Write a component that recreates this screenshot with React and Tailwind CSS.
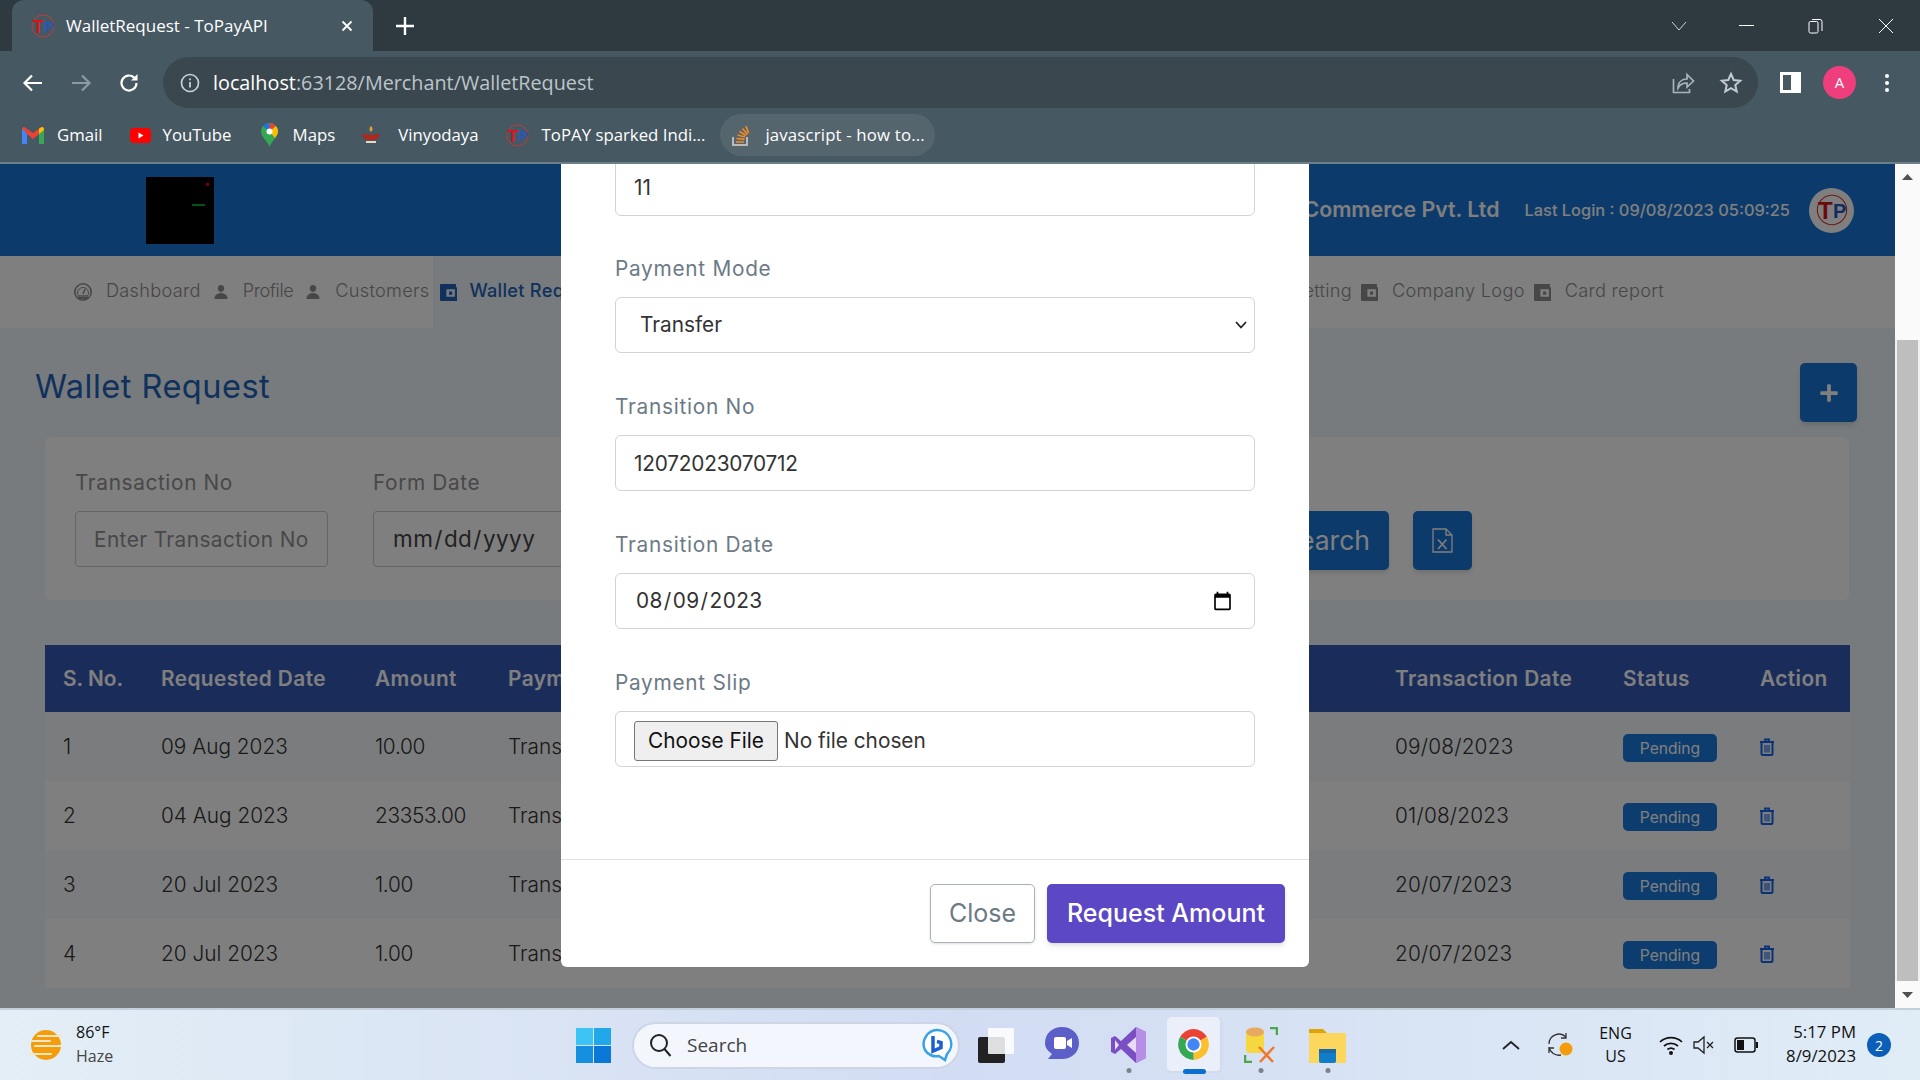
import { FaPlus } from "react-icons/fa";
import { IoPerson } from "react-icons/io5";

const rows = [
    { no: 1, req: "09 Aug 2023", amount: "10.00", tran: "09/08/2023" },
    { no: 2, req: "04 Aug 2023", amount: "23353.00", tran: "01/08/2023" },
    { no: 3, req: "20 Jul 2023", amount: "1.00", tran: "20/07/2023" },
    { no: 4, req: "20 Jul 2023", amount: "1.00", tran: "20/07/2023" },
];

function TpLogo({ size = 24 }) {
    return (
        <svg width={size} height={size} viewBox="0 0 24 24" className="shrink-0">
            <circle cx="12" cy="12" r="11" fill="none" stroke="#d33" strokeWidth="0.8" />
            <text x="1.500" y="19" fontSize="18" fontWeight="700" fontFamily="Liberation Sans" fill="#d8151c">T</text>
            <text x="12.800" y="18" fontSize="15" fontWeight="700" fontFamily="Liberation Sans" fill="#2557c0">P</text>
        </svg>
    );
}

function WalletIcon({ className }) {
    return (
        <svg viewBox="1 1 16 16" className={className}>
            <path
                fillRule="evenodd"
                fill="currentColor"
                d="M2 1h14v3h1v13H2a1 1 0 0 1-1-1V2a1 1 0 0 1 1-1zM7 6v7h8V6H7zm2.500 2h3v3h-3V8z"
            />
        </svg>
    );
}

function GaugeIcon({ className }) {
    return (
        <svg viewBox="0 0 18 18" className={className}>
            <circle cx="9" cy="9" r="8.200" fill="none" stroke="currentColor" strokeWidth="1.600" />
            <path d="M3.500 10a5.500 5.500 0 0 1 11 0c0 1-.3 2-.8 2.800H4.300A5.500 5.500 0 0 1 3.500 10z" fill="none" stroke="currentColor" strokeWidth="1" />
            <path d="M9 11l2-5" stroke="currentColor" strokeWidth="1.400" />
            <path d="M4 13.500h10V16H4z" fill="currentColor" />
        </svg>
    );
}

function TrashIcon() {
    return (
        <svg width="16" height="18" viewBox="0 0 16 18" className="text-[#1565e8]">
            <path d="M1 4h14M6 3.500V1.500h4v2" fill="none" stroke="currentColor" strokeWidth="1.800" />
            <path d="M2.500 4.500v11.500a1 1 0 0 0 1 1h9a1 1 0 0 0 1-1V4.500" fill="none" stroke="currentColor" strokeWidth="2" />
            <path d="M6 7v7.500M8 7v7.500M10 7v7.500" stroke="currentColor" strokeWidth="1.100" />
        </svg>
    );
}

function ExcelIcon() {
    return (
        <svg width="21" height="25" viewBox="0 0 21 25" className="text-white">
            <path d="M1 1h13l6 6v17H1zM14 1v6h6" fill="none" stroke="currentColor" strokeWidth="1.300" />
            <path d="M6 11.500l8.500 9.500M14.500 11.500L6 21" stroke="currentColor" strokeWidth="1.700" />
        </svg>
    );
}

function ChromeBar() {
    return (
        <div className="font-['Open_Sans',sans-serif] text-white shrink-0">
            <div className="h-[51px] bg-[#2e3a40] flex">
                <div className="ml-[12px] w-[361px] bg-[#465862] rounded-t-[12px] flex items-center pl-[19px]">
                    <TpLogo size={24} />
                    <span className="ml-[11px] text-[17px]">WalletRequest - ToPayAPI</span>
                    <svg width="12" height="12" viewBox="0 0 12 12" className="ml-[73px]">
                        <path d="M1.500 1.500l9 9M10.500 1.500l-9 9" stroke="#fff" strokeWidth="1.800" />
                    </svg>
                </div>
                <div className="ml-[23px] self-center">
                    <svg width="18" height="18" viewBox="0 0 18 18">
                        <path d="M9 0v18M0 9h18" stroke="#fff" strokeWidth="2.400" />
                    </svg>
                </div>
                <div className="ml-auto flex items-center pr-[26px]">
                    <svg width="16" height="10" viewBox="0 0 16 10" className="mr-[52px]">
                        <path d="M1 1l7 8 7-8" fill="none" stroke="#cfd6da" strokeWidth="1" />
                    </svg>
                    <div className="w-[15px] h-px bg-white mr-[54px]" />
                    <svg width="15" height="16" viewBox="0 0 15 16" className="mr-[55px]">
                        <path d="M4 1.500h8a2 2 0 0 1 2 2V13M1 5a1.500 1.500 0 0 1 1.500-1.500h6A1.500 1.500 0 0 1 10 5v8.500A1.500 1.500 0 0 1 8.500 15h-6A1.500 1.500 0 0 1 1 13.500z" fill="none" stroke="#fff" strokeWidth="1" />
                    </svg>
                    <svg width="16" height="16" viewBox="0 0 16 16">
                        <path d="M1 1l14 14M15 1L1 15" stroke="#fff" strokeWidth="1" />
                    </svg>
                </div>
            </div>
            <div className="h-[57px] bg-[#465862] flex items-center pt-[6px]">
                <svg width="22" height="22" viewBox="0 0 22 22" className="ml-[22px]">
                    <path d="M20 11H3M10 3.500L2.500 11l7.500 7.500" fill="none" stroke="#fff" strokeWidth="2.200" />
                </svg>
                <svg width="22" height="22" viewBox="0 0 22 22" className="ml-[26px]">
                    <path d="M2 11h17M12 3.500l7.500 7.500-7.500 7.500" fill="none" stroke="#8d9aa2" strokeWidth="2.200" />
                </svg>
                <svg width="22" height="22" viewBox="0 0 22 22" className="ml-[26px]">
                    <path d="M18.500 11a7.500 7.500 0 1 1-2.300-5.400" fill="none" stroke="#fff" strokeWidth="2.200" />
                    <path d="M19.500 2v6.500H13z" fill="#fff" />
                </svg>
                <div className="ml-[23px] w-[1595px] h-[51px] bg-[#3b474f] rounded-full flex items-center pl-[17px] pr-[15px]">
                    <svg width="20" height="20" viewBox="0 0 20 20">
                        <circle cx="10" cy="10" r="8.500" fill="none" stroke="#c8d0d4" strokeWidth="1.700" />
                        <path d="M10 9v5.500M10 5.500v1.800" stroke="#c8d0d4" strokeWidth="1.800" />
                    </svg>
                    <span className="ml-[13px] text-[19.800px] text-white">localhost</span>
                    <span className="text-[19.800px] text-[#bcc5ca]">:63128/Merchant/WalletRequest</span>
                    <svg width="24" height="24" viewBox="0 0 24 24" className="ml-auto mr-[24px]">
                        <path d="M2.500 8v13.500h16V18M7 17c0-6 4-9 9-9V3.500L22.500 10 16 16v-4c-4 0-7 1.500-9 5z" fill="none" stroke="#aab3b8" strokeWidth="1.700" />
                    </svg>
                    <svg width="24" height="24" viewBox="0 0 24 24">
                        <path d="M12 3l2.700 6 6.500.7-4.900 4.300 1.400 6.500L12 17.200l-5.700 3.300 1.400-6.500L2.800 9.700 9.300 9z" fill="none" stroke="#c3cbd0" strokeWidth="2" />
                    </svg>
                </div>
                <div className="ml-[22px] w-[21px] h-[21px] border-[3px] border-white border-r-[10px] bg-transparent" />
                <div className="ml-[22px] w-[33px] h-[33px] rounded-full bg-[#ee3f7c] flex items-center justify-center text-[15px]">A</div>
                <div className="ml-[29px] flex flex-col gap-[3px]">
                    <i className="w-[4px] h-[4px] rounded-full bg-white block" />
                    <i className="w-[4px] h-[4px] rounded-full bg-white block" />
                    <i className="w-[4px] h-[4px] rounded-full bg-white block" />
                </div>
            </div>
            <div className="h-[56px] bg-[#465862] border-b-[2px] border-[#6c7e88] flex items-center text-[16.800px] pl-[22px]">
                <svg width="22" height="17" viewBox="0 0 22 17">
                    <path d="M0 2v15h5V7l6 5 6-5v10h5V2a2 2 0 0 0-3.200-1.600L11 6 3.200.4A2 2 0 0 0 0 2z" fill="#ea4335" />
                    <path d="M0 2v15h5V7L2 3z" fill="#4285f4" />
                    <path d="M17 7v10h5V2l-3 1z" fill="#34a853" />
                    <path d="M18.800.4L17 1.800V7l5-4V2a2 2 0 0 0-3.200-1.600z" fill="#fbbc04" />
                </svg>
                <span className="ml-[13px]">Gmail</span>
                <svg width="21" height="21" viewBox="0 0 21 21" className="ml-[27px]">
                    <rect y="3" width="21" height="15" rx="4" fill="#f00" />
                    <path d="M8.500 7.500v6l5-3z" fill="#fff" />
                </svg>
                <span className="ml-[12px]">YouTube</span>
                <svg width="17" height="24" viewBox="0 0 17 24" className="ml-[29px]">
                    <path d="M8.500 0A8.500 8.500 0 0 0 0 8.500C0 14 6 17 8.500 24 11 17 17 14 17 8.500A8.500 8.500 0 0 0 8.500 0z" fill="#34a853" />
                    <path d="M8.500 0A8.500 8.500 0 0 0 2 3l6.500 5.500z" fill="#1a73e8" />
                    <path d="M8.500 0A8.500 8.500 0 0 1 15 3L8.500 8.500z" fill="#ea4335" />
                    <path d="M15 3a8.500 8.500 0 0 1 2 5.500c0 2.500-1.500 4.500-3 6.500L8.500 8.500z" fill="#fbbc04" />
                    <circle cx="8.500" cy="8.500" r="3" fill="#fff" />
                </svg>
                <span className="ml-[15px]">Maps</span>
                <svg width="18" height="18" viewBox="0 0 18 18" className="ml-[27px]">
                    <path d="M9 0c2 2 2 4 0 6-2-2-2-4 0-6z" fill="#f0a030" />
                    <path d="M0 8c3 0 6 1 9 1s6-1 9-1c-1 5-5 6-9 6S1 13 0 8z" fill="#b3261e" />
                    <rect x="4" y="15" width="10" height="2" fill="#e8d9c0" />
                </svg>
                <span className="ml-[18px]">Vinyodaya</span>
                <div className="ml-[27px]"><TpLogo size={23} /></div>
                <span className="ml-[13px]">ToPAY sparked Indi...</span>
                <div className="ml-[15px] w-[215px] h-[42px] rounded-full bg-[#55656e] flex items-center pl-[12px]">
                    <svg width="18" height="22" viewBox="0 0 18 22">
                        <path d="M1 13v8h14v-8" fill="none" stroke="#b9b9b9" strokeWidth="2" />
                        <path d="M4 18h8M4.500 14.500l8 .8M5.500 11l7.500 2M7.500 7.500l6.500 4M10.500 4.500l5 6M14 2l2.500 7" stroke="#f28a24" strokeWidth="1.700" />
                    </svg>
                    <span className="ml-[15px] tracking-[0.01em]">javascript - how to...</span>
                </div>
            </div>
        </div>
    );
}

function NavItem({ icon, label, active, textClass = "" }) {
    return (
        <div className={`flex items-center h-[72px] ${active ? "gap-[12px] bg-[#eef6fc] text-[#1e63b8] font-medium pl-[7px] pr-[20px] -ml-[8px]" : "gap-[14px]"}`}>
            {icon}
            <span className={`-mt-[2px] ${textClass}`}>{label}</span>
        </div>
    );
}

function Nav() {
    const person = <IoPerson className="w-[16px] h-[16px]" />;
    const wallet = <WalletIcon className="w-[17px] h-[17px]" />;
    return (
        <div className="h-[72px] bg-white flex items-center text-[18.200px] font-light text-[#8e8e8e] pl-[74px] pr-[231px] shrink-0 tracking-[0.015em]">
            <div className="flex items-center gap-[12px]">
                <NavItem icon={<GaugeIcon className="w-[18px] h-[18px]" />} label="Dashboard" />
                <NavItem icon={person} label="Profile" textClass="tracking-[-0.025em]" />
                <NavItem icon={person} label="Customers" />
                <NavItem icon={wallet} label="Wallet Request" active />
            </div>
            <div className="ml-auto flex items-center gap-[9px]">
                <NavItem icon={wallet} label="Setting" />
                <NavItem icon={wallet} label="Company Logo" />
                <NavItem icon={wallet} label="Card report" />
            </div>
        </div>
    );
}

function FilterField({ label, children }) {
    return (
        <div className="w-[253px] shrink-0">
            <label className="block text-[20.800px] leading-[31px] mb-[13px] text-[#909090] tracking-[0.03em]">{label}</label>
            {children}
        </div>
    );
}

const filterInput = "block w-full h-[56px] border border-[#c6ccd2] rounded-[4px] bg-white px-[18px] text-[20.800px] text-[#333] placeholder:text-[#909090] tracking-[0.02em]";

function WalletPage() {
    return (
        <div className="absolute inset-0 bg-[#eef6fc] flex flex-col">
            <div className="h-[92px] bg-[#1874d6] flex items-center shrink-0 text-white">
                <div className="ml-[146px] w-[68px] h-[67px] bg-black relative">
                    <i className="absolute left-[60px] top-[6px] w-[3px] h-[3px] bg-red-600 block" />
                    <i className="absolute left-[46px] top-[27px] w-[13px] h-[2px] bg-green-600 block" />
                </div>
                <span className="ml-auto text-[21.300px] font-semibold">ToPay Commerce Pvt. Ltd</span>
                <span className="ml-[25px] text-[16.400px] font-medium">Last Login : 09/08/2023 05:09:25</span>
                <div className="ml-[19px] mr-[41px] w-[45px] h-[45px] rounded-full bg-white flex items-center justify-center">
                    <TpLogo size={32} />
                </div>
            </div>
            <Nav />
            <div className="flex items-start justify-between pl-[35px] pr-[38px] pt-[35px] shrink-0">
                <h1 className="text-[32.500px] text-[#1e63b8] leading-[48px] tracking-[0.015em]">Wallet Request</h1>
                <button className="w-[57px] h-[59px] rounded-[5px] bg-[#1874d6] text-white flex items-center justify-center shadow-md">
                    <FaPlus className="w-[20px] h-[20px]" />
                </button>
            </div>
            <div className="mt-[15px] ml-[45px] mr-[46px] bg-white rounded-[6px] px-[30px] pt-[30px] pb-[30px] flex items-start gap-[45px] shrink-0">
                <FilterField label="Transaction No">
                    <input className={filterInput} placeholder="Enter Transaction No" />
                </FilterField>
                <FilterField label="Form Date">
                    <input type="date" className={`${filterInput} text-[#444] text-[22.500px]`} />
                </FilterField>
                <FilterField label="To Date">
                    <input type="date" className={filterInput} />
                </FilterField>
                <FilterField label="Status">
                    <input className={filterInput} />
                </FilterField>
                <div className="flex gap-[24px] -ml-[4px] mt-[44px] shrink-0">
                    <button className="w-[126px] h-[59px] rounded-[5px] bg-[#1874d6] text-white text-[26.500px] shadow-md">Search</button>
                    <button className="w-[59px] h-[59px] rounded-[5px] bg-[#1874d6] text-white flex items-center justify-center shadow-md">
                        <ExcelIcon />
                    </button>
                </div>
            </div>
            <div className="mt-[45px] mx-[45px] shrink-0">
                <table className="w-[1805px] table-fixed text-left text-[20.800px] text-[#333] font-light">
                    <colgroup>
                        <col className="w-[98px]" />
                        <col className="w-[214px]" />
                        <col className="w-[133px]" />
                        <col className="w-[444px]" />
                        <col className="w-[443px]" />
                        <col className="w-[228px]" />
                        <col className="w-[137px]" />
                        <col className="w-[108px]" />
                    </colgroup>
                    <thead className="bg-[#345ab4] text-white tracking-[0.02em]">
                        <tr className="h-[67px]">
                            <th className="pl-[18px] font-semibold tracking-normal">S. No.</th>
                            <th className="pl-[18px] font-semibold">Requested Date</th>
                            <th className="pl-[18px] font-semibold">Amount</th>
                            <th className="pl-[18px] font-semibold">Payment Mode</th>
                            <th className="pl-[18px] font-semibold">Transition No</th>
                            <th className="pl-[18px] font-semibold">Transaction Date</th>
                            <th className="pl-[18px] font-semibold">Status</th>
                            <th className="pl-[18px] font-semibold">Action</th>
                        </tr>
                    </thead>
                    <tbody>
                        {rows.map((r) => (
                            <tr key={r.no} className={`h-[69px] ${r.no % 2 ? "bg-[#f5f8fa]" : "bg-white"}`}>
                                <td className="pl-[18px]">{r.no}</td>
                                <td className="pl-[18px]">{r.req}</td>
                                <td className="pl-[18px] tracking-[-0.015em]">{r.amount}</td>
                                <td className="pl-[18px]">Transfer</td>
                                <td className="pl-[18px]">12072023070712</td>
                                <td className="pl-[18px] tracking-[0.01em]">{r.tran}</td>
                                <td className="pl-[18px]">
                                    <span className="inline-flex items-center justify-center w-[94px] h-[28px] rounded-[5px] bg-[#1a78dc] text-white text-[15.600px] font-normal">Pending</span>
                                </td>
                                <td className="pl-[17px]">
                                    <TrashIcon />
                                </td>
                            </tr>
                        ))}
                    </tbody>
                </table>
            </div>
        </div>
    );
}

function ModalField({ label, children }) {
    return (
        <div>
            <label className="block text-[20.800px] leading-[31px] mb-[13px] text-[#6c7a86] tracking-[0.035em]">{label}</label>
            {children}
        </div>
    );
}

const modalInput = "block w-full h-[56px] border border-[#ced4da] rounded-[6px] bg-white pl-[18px] pr-[16px] text-[20.800px] text-[#333]";

function RequestModal() {
    return (
        <div className="absolute left-[561px] top-0 w-[748px] h-[803px] bg-white rounded-b-[6px] overflow-hidden flex flex-col">
            <div className="flex-1 px-[54px] flex flex-col gap-[38px] overflow-hidden">
                <input className={`${modalInput} h-[57px] -mt-[5px] -mb-[1px] shrink-0`} defaultValue="11" />
                <ModalField label="Payment Mode">
                    <div className="relative">
                        <select className={`${modalInput} pl-[24px] appearance-none`} defaultValue="Transfer">
                            <option>Transfer</option>
                        </select>
                        <svg width="12" height="8" viewBox="0 0 12 8" className="absolute right-[8px] top-[24px]">
                            <path d="M1 1l5 5.500L11 1" fill="none" stroke="#222" strokeWidth="1.800" />
                        </svg>
                    </div>
                </ModalField>
                <ModalField label="Transition No">
                    <input className={`${modalInput} tracking-[-0.01em]`} defaultValue="12072023070712" />
                </ModalField>
                <ModalField label="Transition Date">
                    <input type="date" className={`${modalInput} pl-[19px] pr-[19px] tracking-[0.02em]`} defaultValue="2023-08-09" />
                </ModalField>
                <ModalField label="Payment Slip">
                    <input
                        type="file"
                        className="block w-full h-[56px] border border-[#ced4da] rounded-[6px] bg-white pl-[18px] pt-[9px] text-[20.800px] text-[#333] file:h-[40px] file:w-[144px] file:mr-[6px] file:bg-[#efefef] file:border file:border-[#767676] file:rounded-[3px] file:text-[#111]"
                    />
                </ModalField>
            </div>
            <div className="h-[108px] border-t border-[#dee2e6] flex items-center justify-end gap-[12px] pr-[24px] shrink-0">
                <button className="w-[105px] h-[59px] border border-[#a9b2b9] rounded-[5px] text-[#6c7a86] text-[25px] shadow-sm">Close</button>
                <button className="w-[238px] h-[59px] rounded-[5px] bg-[#5c48c4] text-white text-[25px] font-medium shadow-md">Request Amount</button>
            </div>
        </div>
    );
}

function Scrollbar() {
    return (
        <div className="w-[25px] shrink-0 bg-[#f1f1f1] flex flex-col items-center">
            <div className="h-[176px] w-full pt-[10px] flex justify-center bg-[#fafafa]">
                <svg width="11" height="6" viewBox="0 0 11 6"><path d="M5.500 0L11 6H0z" fill="#505050" /></svg>
            </div>
            <div className="flex-1 w-[21px] bg-[#bebebe]" />
            <div className="h-[27px] w-full flex items-center justify-center bg-[#fafafa]">
                <svg width="11" height="6" viewBox="0 0 11 6"><path d="M0 0h11L5.500 6z" fill="#505050" /></svg>
            </div>
        </div>
    );
}

function TaskIcon({ children, dot, className }) {
    return (
        <div className={`relative flex justify-center items-center ${className}`}>
            {children}
            {dot && <i className="absolute left-1/2 -translate-x-1/2 top-[41px] w-[5px] h-[5px] rounded-full bg-[#7d8288] block" />}
        </div>
    );
}

function Taskbar() {
    return (
        <div className="h-[72px] shrink-0 border-t-[2px] border-[#c5cfdc] bg-gradient-to-r from-[#e3eef6] via-[#d2dcf3] to-[#e0ecf6] flex items-center font-['Open_Sans',sans-serif] text-[#111]">
            <div className="w-[576px] shrink-0 flex items-center pl-[29px]">
                <svg width="33" height="30" viewBox="0 0 33 30">
                    <ellipse cx="17" cy="15" rx="15" ry="15" fill="#f59c0c" />
                    <path d="M9 6h24M3 11h18M6 16h27M0 24h22" stroke="#f5e6c4" strokeWidth="2.200" strokeLinecap="round" />
                </svg>
                <div className="ml-[14px] leading-[24px] text-[16px] -mt-[2px]">
                    <div>86°F</div>
                    <div className="text-[#444]">Haze</div>
                </div>
            </div>
            <TaskIcon className="w-[35px] h-[35px]">
                <svg width="35" height="35" viewBox="0 0 35 35">
                    <rect width="17" height="17" fill="#3cc4f4" />
                    <rect x="18" width="17" height="17" fill="#20a8ea" />
                    <rect y="18" width="17" height="17" fill="#1590e0" />
                    <rect x="18" y="18" width="17" height="17" fill="#0a78d6" />
                </svg>
            </TaskIcon>
            <div className="ml-[21px] w-[328px] h-[47px] rounded-full bg-[#f3f6fd] border-2 border-[#cdd5e6] flex items-center pl-[15px] pr-[5px]">
                <svg width="23" height="24" viewBox="0 0 23 24">
                    <circle cx="10" cy="10" r="8" fill="none" stroke="#222" strokeWidth="2" />
                    <path d="M15.500 16l6 7" stroke="#222" strokeWidth="2" />
                </svg>
                <span className="ml-[15px] text-[19px] text-[#444]">Search</span>
                <svg width="32" height="34" viewBox="0 0 32 34" className="ml-auto">
                    <path d="M16 2a14 14 0 0 1 10 24l-2 6-6-4A13 13 0 0 1 4 22 14 14 0 0 1 16 2z" fill="#fff" stroke="#36a3e8" strokeWidth="2.500" />
                    <path d="M12 8v15l8-3.500v-5l-4-1" fill="none" stroke="#1c5fd4" strokeWidth="3.500" />
                </svg>
            </div>
            <TaskIcon className="ml-[18px] w-[36px] h-[35px]">
                <svg width="36" height="35" viewBox="0 0 36 35">
                    <rect y="9" width="27" height="26" rx="2" fill="#222" />
                    <rect x="10" width="26" height="26" rx="1" fill="#fff" fillOpacity="0.85" />
                </svg>
            </TaskIcon>
            <TaskIcon className="ml-[31px] w-[34px] h-[36px]">
                <svg width="34" height="36" viewBox="0 0 34 36">
                    <path d="M17 0c9 0 17 6 17 16s-8 16-17 16H3l4-5C3 24 0 21 0 16 0 6 8 0 17 0z" fill="#5d5fc9" />
                    <rect x="9" y="10" width="12" height="12" rx="2" fill="#fff" />
                    <path d="M22 14l5-3v10l-5-3z" fill="#fff" />
                </svg>
            </TaskIcon>
            <TaskIcon dot className="ml-[32px] w-[35px] h-[36px]">
                <svg width="35" height="36" viewBox="0 0 35 36">
                    <path d="M25 0l10 5v26l-10 5-15-14-6 5-4-2V11l4-2 6 5z" fill="#7a4fc4" />
                    <path d="M25 0l10 5v26l-10 5z" fill="#b68ee6" />
                    <path d="M25 10v16l-9-8z" fill="#e8dcf6" />
                    <path d="M4 13v10l4-5z" fill="#e8dcf6" />
                </svg>
            </TaskIcon>
            <div className="ml-[21px] w-[55px] h-[56px] relative rounded-[5px] bg-[#eaeffa] border-r-[2px] border-b-[2px] border-[#d2dbec] flex items-center justify-center">
                <svg width="37" height="37" viewBox="0 0 24 24">
                    <path d="M12 12L3.340 7A10 10 0 0 1 20.660 7z" fill="#ea4335" />
                    <path d="M12 12L20.660 7A10 10 0 0 1 12 22z" fill="#fbc02d" />
                    <path d="M12 12L12 22A10 10 0 0 1 3.340 7z" fill="#34a853" />
                    <circle cx="12" cy="12" r="5.200" fill="#fff" />
                    <circle cx="12" cy="12" r="4" fill="#4285f4" />
                </svg>
                <i className="absolute left-[16px] top-[52px] w-[23px] h-[5px] rounded-full bg-[#0a6fd0] block" />
            </div>
            <TaskIcon dot className="ml-[22px] w-[34px] h-[36px]">
                <svg width="34" height="36" viewBox="0 0 34 36">
                    <path d="M1 28v7h7M33 8V1h-7" fill="none" stroke="#4aa84a" strokeWidth="2.500" />
                    <rect x="2" y="2" width="18" height="24" rx="4" fill="#f5d840" />
                    <ellipse cx="11" cy="5" rx="9" ry="4.500" fill="#e8a860" />
                    <path d="M15 20l14 15M30 20L16 35" stroke="#f0782a" strokeWidth="2.500" />
                </svg>
            </TaskIcon>
            <TaskIcon dot className="ml-[31px] w-[37px] h-[36px]">
                <svg width="37" height="36" viewBox="0 0 37 36">
                    <path d="M0 2h14l4 4h19v4H0z" fill="#dfa406" />
                    <rect y="6" width="37" height="30" fill="#fdd65e" />
                    <rect x="10" y="22" width="17" height="14" rx="2" fill="#0f7dc8" />
                    <rect x="10" y="22" width="17" height="4" fill="#1a6aa8" />
                </svg>
            </TaskIcon>
            <div className="flex-1 flex items-center pr-[29px]">
                <svg width="20" height="10" viewBox="0 0 20 10" className="ml-[155px]">
                    <path d="M2 9l8-7 8 7" fill="none" stroke="#222" strokeWidth="1.800" />
                </svg>
                <svg width="26" height="26" viewBox="0 0 26 26" className="ml-[26px]">
                    <path d="M2 12a10 10 0 0 1 17-7M19 1v5h-5M14 23A10 10 0 0 1 2 15M2 21v-5h5" fill="none" stroke="#333" strokeWidth="1.300" />
                    <circle cx="19" cy="17" r="6.500" fill="#f59c0c" />
                </svg>
                <div className="ml-[24px] w-[37px] text-center text-[16px] leading-[23px]">
                    <div>ENG</div>
                    <div>US</div>
                </div>
                <svg width="24" height="22" viewBox="0 0 24 22" className="ml-[25px]">
                    <path d="M1 8a16 16 0 0 1 22 0M5 12a10.500 10.500 0 0 1 14 0M8.500 15.500a5.500 5.500 0 0 1 7 0" fill="none" stroke="#111" strokeWidth="1.700" />
                    <circle cx="12" cy="19" r="2" fill="#111" />
                </svg>
                <svg width="22" height="22" viewBox="0 0 22 22" className="ml-[10px]">
                    <path d="M1 8v6h4l6 5V3L5 8z" fill="none" stroke="#222" strokeWidth="1.300" />
                    <path d="M14 8l6 6M20 8l-6 6" stroke="#222" strokeWidth="1.300" />
                </svg>
                <svg width="24" height="16" viewBox="0 0 24 16" className="ml-[19px]">
                    <rect x="1" y="1" width="20" height="14" rx="2.500" fill="none" stroke="#111" strokeWidth="1.500" />
                    <rect x="3" y="3" width="7" height="10" fill="#111" />
                    <rect x="22" y="5" width="2" height="6" fill="#111" />
                </svg>
                <div className="ml-auto text-right text-[16.800px] leading-[24px] -mt-[2px]">
                    <div>5:17 PM</div>
                    <div>8/9/2023</div>
                </div>
                <div className="ml-[11px] w-[24px] h-[24px] rounded-full bg-[#0b5fb8] text-white text-[14px] flex items-center justify-center">2</div>
            </div>
        </div>
    );
}

export default function App() {
    return (
        <div className="w-[1920px] h-[1080px] overflow-hidden flex flex-col font-['Inter',sans-serif]">
            <ChromeBar />
            <div className="flex-1 flex min-h-0">
                <div className="relative flex-1 overflow-hidden">
                    <WalletPage />
                    <div className="absolute inset-0 bg-black/50" />
                    <RequestModal />
                </div>
                <Scrollbar />
            </div>
            <Taskbar />
        </div>
    );
}
